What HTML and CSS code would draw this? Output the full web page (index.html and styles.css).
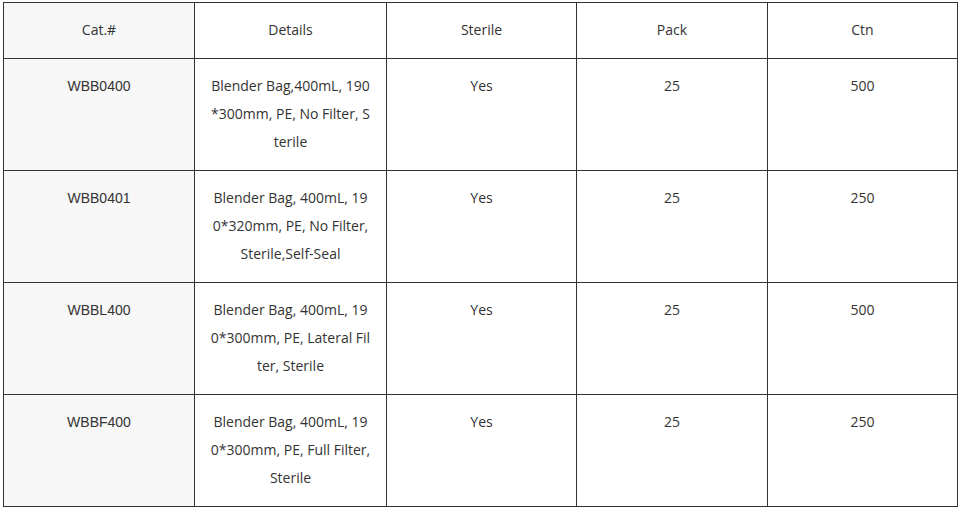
FILE: index.html
```html
<!DOCTYPE html>
<html>
<head>
<meta charset="utf-8">
<link rel="stylesheet" href="styles.css">
</head>
<body>
<table class="spec">
  <colgroup>
    <col class="c1">
    <col class="c2">
    <col class="c3">
    <col class="c4">
    <col class="c5">
  </colgroup>
  <thead>
    <tr>
      <th class="key">Cat.#</th>
      <th>Details</th>
      <th>Sterile</th>
      <th>Pack</th>
      <th>Ctn</th>
    </tr>
  </thead>
  <tbody>
    <tr>
      <td class="key code">WBB0400</td>
      <td class="details">Blender Bag,400mL, 190<br>*300mm, PE, No Filter, S<br>terile</td>
      <td>Yes</td>
      <td>25</td>
      <td>500</td>
    </tr>
    <tr>
      <td class="key code">WBB0401</td>
      <td class="details">Blender Bag, 400mL, 19<br>0*320mm, PE, No Filter,<br>Sterile,Self-Seal</td>
      <td>Yes</td>
      <td>25</td>
      <td>250</td>
    </tr>
    <tr>
      <td class="key code">WBBL400</td>
      <td class="details">Blender Bag, 400mL, 19<br>0*300mm, PE, Lateral Fil<br>ter, Sterile</td>
      <td>Yes</td>
      <td>25</td>
      <td>500</td>
    </tr>
    <tr>
      <td class="key code">WBBF400</td>
      <td class="details">Blender Bag, 400mL, 19<br>0*300mm, PE, Full Filter,<br>Sterile</td>
      <td>Yes</td>
      <td>25</td>
      <td>250</td>
    </tr>
  </tbody>
</table>
</body>
</html>
```
FILE: styles.css
```css
html, body {
  margin: 0;
  padding: 0;
  background: #ffffff;
}
body {
  padding: 2px 0 0 3px;
  font-family: "Source Sans Pro", "Open Sans", "Noto Sans", sans-serif;
  font-size: 14px;
  color: #333333;
}
.spec {
  border-collapse: collapse;
  table-layout: fixed;
  width: 954px;
}
.spec .c1 { width: 191px; }
.spec .c2 { width: 192px; }
.spec .c3 { width: 190px; }
.spec .c4 { width: 191px; }
.spec .c5 { width: 190px; }
.spec th,
.spec td {
  border: 1px solid #333333;
  padding: 13px 10px 14px;
  line-height: 28px;
  text-align: center;
  vertical-align: top;
  font-weight: normal;
  white-space: nowrap;
}
.spec th {
  vertical-align: middle;
}
.spec .key {
  background: #f7f7f7;
}
.spec .code {
  font-family: "Liberation Sans", Arial, sans-serif;
}
```
